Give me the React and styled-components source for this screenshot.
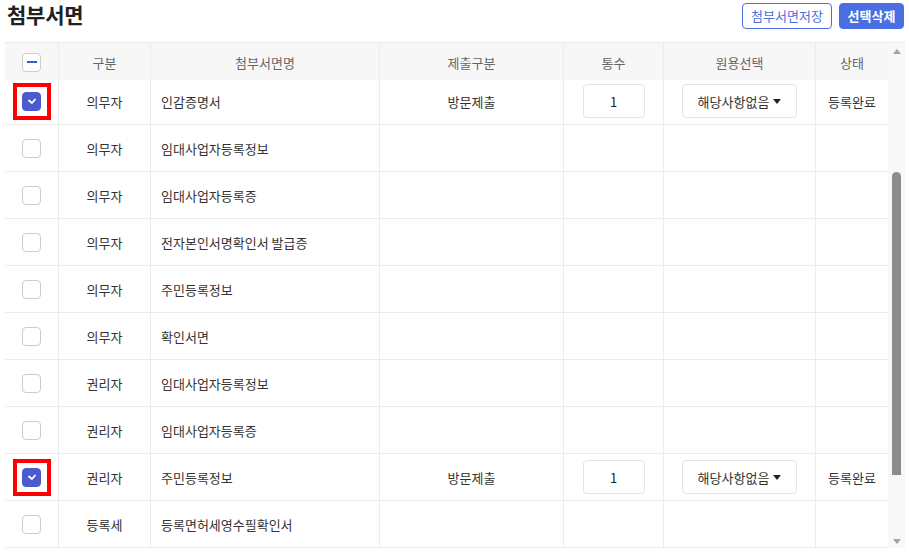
import React from 'react';
import styled, { createGlobalStyle } from 'styled-components';

const GlobalStyle = createGlobalStyle`
  html, body {
    margin: 0;
    padding: 0;
    background: #ffffff;
    font-family: "Noto Sans CJK KR", "Noto Sans", sans-serif;
    color: #333333;
  }
`;

const COLS = '54px 92px 229px 184px 100px 152px 72px';

const Page = styled.div`
  width: 909px;
  height: 555px;
  overflow: hidden;
`;

const TopBar = styled.div`
  height: 42px;
  display: flex;
  align-items: flex-start;
  justify-content: space-between;
  padding: 0 5px 0 7px;
  box-sizing: border-box;
`;

const Title = styled.h1`
  margin: 0;
  font-size: 21px;
  font-weight: 700;
  line-height: 28px;
  color: #222222;
  letter-spacing: -0.2px;
`;

const Actions = styled.div`
  display: flex;
  gap: 7px;
  padding-top: 3px;
`;

const ActionButton = styled.button`
  width: ${p => (p.$primary ? '65px' : '90px')};
  height: 26px;
  padding: 0;
  border-radius: 4px;
  border: 1px solid #4a6fe3;
  background: ${p => (p.$primary ? '#4a6fe3' : '#ffffff')};
  color: ${p => (p.$primary ? '#ffffff' : '#4a6fe3')};
  font-family: inherit;
  font-size: 13px;
  font-weight: ${p => (p.$primary ? 700 : 400)};
  line-height: 24px;
  cursor: pointer;
`;

const TableFrame = styled.div`
  margin-left: 5px;
  width: 900px;
  height: 506px;
  display: flex;
  border-top: 1px solid #ececec;
  box-sizing: border-box;
`;

const Viewport = styled.div`
  width: 883px;
  overflow: hidden;
  display: flex;
  flex-direction: column;
`;

const HeadRow = styled.div`
  display: grid;
  grid-template-columns: ${COLS};
  height: 37px;
  background: #f7f7f7;
  position: relative;
  z-index: 1;
  flex-shrink: 0;
`;

const HeadCell = styled.div`
  display: flex;
  align-items: center;
  justify-content: center;
  font-size: 13px;
  color: #666666;
  padding-top: 1px;
  border-right: ${p => (p.$last ? 'none' : '1px solid #ececec')};
`;

const Body = styled.div`
  margin-top: -2px;
`;

const Row = styled.div`
  display: grid;
  grid-template-columns: ${COLS};
  height: 47px;
  border-bottom: 1px solid #ececec;
  box-sizing: border-box;
`;

const Cell = styled.div`
  display: flex;
  align-items: center;
  justify-content: ${p => (p.$left ? 'flex-start' : 'center')};
  padding-left: ${p => (p.$left ? '10px' : '0')};
  font-size: 13px;
  color: #333333;
  border-right: ${p => (p.$last ? 'none' : '1px solid #ececec')};
  white-space: nowrap;
`;

const Mark = styled.div`
  width: 30px;
  height: 29px;
  border: 4px solid ${p => (p.$on ? '#ff0000' : 'transparent')};
  display: flex;
  align-items: center;
  justify-content: center;
`;

const Box = styled.span`
  width: 19px;
  height: 19px;
  box-sizing: border-box;
  border-radius: 4px;
  border: 1px solid ${p => (p.$checked ? '#4b5bcf' : '#cccccc')};
  background: ${p => (p.$checked ? '#4b5bcf' : '#ffffff')};
  display: flex;
  align-items: center;
  justify-content: center;
`;

const CountInput = styled.div`
  width: 62px;
  height: 34px;
  box-sizing: border-box;
  border: 1px solid #e3e3e3;
  border-radius: 4px;
  display: flex;
  align-items: center;
  justify-content: center;
  font-size: 13px;
  color: #222222;
  background: #ffffff;
`;

const Select = styled.div`
  width: 115px;
  height: 34px;
  box-sizing: border-box;
  border: 1px solid #e3e3e3;
  border-radius: 4px;
  display: flex;
  align-items: center;
  justify-content: center;
  gap: 4px;
  font-size: 13px;
  color: #333333;
  background: #ffffff;
`;

const Caret = styled.span`
  width: 0;
  height: 0;
  border-left: 4px solid transparent;
  border-right: 4px solid transparent;
  border-top: 5px solid #222222;
  margin-top: 1px;
`;

const ScrollTrack = styled.div`
  width: 17px;
  background: #f8f8f8;
  display: flex;
  flex-direction: column;
  align-items: center;
`;

const Arrow = styled.span`
  width: 0;
  height: 0;
  border-left: 4px solid transparent;
  border-right: 4px solid transparent;
  ${p => (p.$down ? 'border-top: 5px solid #a3a3a3;' : 'border-bottom: 5px solid #a3a3a3;')}
  margin-top: ${p => (p.$down ? 'auto' : '6px')};
  margin-bottom: ${p => (p.$down ? '4px' : '0')};
`;

const Thumb = styled.div`
  width: 9px;
  height: 303px;
  margin-top: 118px;
  border-radius: 5px 5px 0 0;
  background: #8c8c8c;
`;

const rows = [
  { type: '의무자', name: '인감증명서', filled: true },
  { type: '의무자', name: '임대사업자등록정보' },
  { type: '의무자', name: '임대사업자등록증' },
  { type: '의무자', name: '전자본인서명확인서 발급증' },
  { type: '의무자', name: '주민등록정보' },
  { type: '의무자', name: '확인서면' },
  { type: '권리자', name: '임대사업자등록정보' },
  { type: '권리자', name: '임대사업자등록증' },
  { type: '권리자', name: '주민등록정보', filled: true },
  { type: '등록세', name: '등록면허세영수필확인서' },
];

const Check = () => (
  <svg width="10" height="8" viewBox="0 0 10 8">
    <path d="M2 3.5 L5 6 L8 2.5" fill="none" stroke="#ffffff" strokeWidth="1.8" strokeLinecap="round" strokeLinejoin="round" />
  </svg>
);

const Dash = () => (
  <svg width="10" height="2" viewBox="0 0 10 2">
    <rect x="0" y="0" width="10" height="2" fill="#3d5ccc" />
  </svg>
);

const App = () => {
  return (
    <Page>
      <GlobalStyle />
      <TopBar>
        <Title>첨부서면</Title>
        <Actions>
          <ActionButton>첨부서면저장</ActionButton>
          <ActionButton $primary>선택삭제</ActionButton>
        </Actions>
      </TopBar>
      <TableFrame>
        <Viewport>
          <HeadRow>
            <HeadCell>
              <Box><Dash /></Box>
            </HeadCell>
            <HeadCell>구분</HeadCell>
            <HeadCell>첨부서면명</HeadCell>
            <HeadCell>제출구분</HeadCell>
            <HeadCell>통수</HeadCell>
            <HeadCell>원용선택</HeadCell>
            <HeadCell $last>상태</HeadCell>
          </HeadRow>
          <Body>
            {rows.map((row, index) => (
              <Row key={index}>
                <Cell>
                  <Mark $on={row.filled}>
                    <Box $checked={row.filled}>{row.filled && <Check />}</Box>
                  </Mark>
                </Cell>
                <Cell>{row.type}</Cell>
                <Cell $left>{row.name}</Cell>
                <Cell>{row.filled ? '방문제출' : ''}</Cell>
                <Cell>{row.filled && <CountInput>1</CountInput>}</Cell>
                <Cell>
                  {row.filled && (
                    <Select>
                      해당사항없음 <Caret />
                    </Select>
                  )}
                </Cell>
                <Cell $last>{row.filled ? '등록완료' : ''}</Cell>
              </Row>
            ))}
          </Body>
        </Viewport>
        <ScrollTrack>
          <Arrow />
          <Thumb />
          <Arrow $down />
        </ScrollTrack>
      </TableFrame>
    </Page>
  );
};

export default App;
